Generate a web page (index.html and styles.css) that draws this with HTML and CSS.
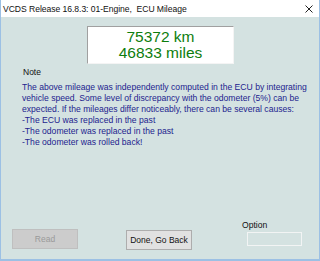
FILE: index.html
```html
<!DOCTYPE html>
<html>
<head>
<meta charset="utf-8">
<link rel="stylesheet" href="styles.css">
</head>
<body>
<div class="window">
  <div class="titlebar">
    <span class="title">VCDS Release 16.8.3: 01-Engine,&nbsp; ECU Mileage</span>
    <svg class="close" width="8" height="8" viewBox="0 0 8 8"><path d="M0.5 0.5L7.5 7.5M7.5 0.5L0.5 7.5" stroke="#222" stroke-width="1"/></svg>
  </div>
  <div class="client">
    <div class="readout">
      <div>75372 km</div>
      <div>46833 miles</div>
    </div>
    <div class="note-label">Note</div>
    <div class="note">The above mileage was independently computed in the ECU by integrating<br>vehicle speed. Some level of discrepancy with the odometer (5%) can be<br>expected. If the mileages differ noticeably, there can be several causes:<br>-The ECU was replaced in the past<br>-The odometer was replaced in the past<br>-The odometer was rolled back!</div>
    <div class="footer">
      <button class="btn btn-read" disabled>Read</button>
      <button class="btn btn-done">Done, Go Back</button>
      <div class="option">
        <span class="option-label">Option</span>
        <div class="option-box"></div>
      </div>
    </div>
  </div>
</div>
</body>
</html>
```
FILE: styles.css
```css
* { box-sizing: border-box; }
html, body { margin: 0; padding: 0; }
body { width: 320px; height: 261px; background: #ffffff; font-family: "Liberation Sans", Arial, sans-serif; }
.window {
  width: 320px; height: 261px;
  display: flex; flex-direction: column;
  border-left: 1px solid #9cc0e4; border-right: 1px solid #9cc0e4; border-bottom: 2px solid #9cc0e4;
  background: #d4e2e1;
}
.titlebar {
  height: 17px; background: #ffffff;
  display: flex; align-items: center; justify-content: space-between;
  padding: 0 6px 0 2px;
}
.title { font-size: 8.6px; color: #111; letter-spacing: -0.05px; }
.close { margin-top: 1px; }
.client { flex: 1; display: flex; flex-direction: column; }
.readout {
  align-self: center; margin-top: 9px; margin-left: 1px;
  width: 147px; height: 38px; background: #ffffff;
  border-top: 1px solid #a0a0a0; border-left: 1px solid #a0a0a0;
  border-right: 1px solid #f4f4f4; border-bottom: 1px solid #f4f4f4;
  display: flex; flex-direction: column; align-items: center; justify-content: center;
  color: #0d7d0d; font-size: 15.5px; line-height: 16px;
}
.note-label { margin: 3px 0 0 22px; font-size: 8.5px; line-height: 11px; color: #111; }
.note { margin: 4px 0 0 21px; font-size: 8.6px; line-height: 11px; color: #22228e; }
.footer { margin-top: auto; height: 40px; display: flex; align-items: flex-start; padding-left: 11px; }
.btn {
  font-family: "Liberation Sans", Arial, sans-serif; font-size: 8.5px; padding: 0;
  height: 20px; width: 66px; margin-top: 10px;
}
.btn-read { background: #cccccc; border: 1px solid #bfbfbf; color: #9a9a9a; }
.btn-done { background: #e1e1e1; border: 1px solid #adadad; color: #111; margin-left: 48px; margin-top: 11px; }
.option { margin-left: 50px; display: flex; flex-direction: column; }
.option-label { font-size: 8.6px; line-height: 10px; color: #111; margin-top: 1px; }
.option-box { width: 55px; height: 14px; margin-left: 5px; margin-top: 2px; border: 1px solid #f2f4f4; }
```
